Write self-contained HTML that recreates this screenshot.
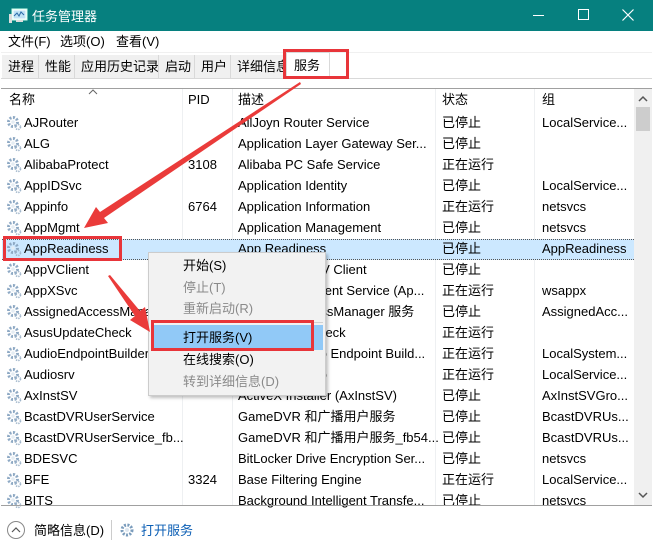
<!DOCTYPE html>
<html><head><meta charset="utf-8"><style>
*{margin:0;padding:0;box-sizing:border-box}
body{width:653px;height:556px;overflow:hidden;background:#fff;font-family:"Liberation Sans","Noto Sans CJK SC",sans-serif;font-size:13px;color:#000;position:relative}
.abs{position:absolute}
#title{position:absolute;left:0;top:0;width:653px;height:31px;background:#06807f;color:#fff;font-size:13px}
#menu span{position:absolute;top:31px;font-size:13px}
.tab{position:absolute;top:55px;height:24px;line-height:23px;font-size:13px;background:#f0f0f0;border-right:1px solid #d9d9d9;padding-left:6px;white-space:nowrap;overflow:hidden}
.row{position:absolute;left:1px;width:633px;height:21px;line-height:21px;white-space:nowrap}
.row span{position:absolute;top:0}
.gear{position:absolute;left:5px;top:3px;width:16px;height:16px}
.cl{position:absolute;top:89px;width:1px;height:417px;background:#eef0f2}
.mi{position:absolute;left:183px;font-size:13px}
.dis{color:#8a8a8a}
</style></head><body>
<div id="title">
 <svg class="abs" style="left:8px;top:8px" width="20" height="16" viewBox="0 0 20 16"><rect x="4" y="1" width="15" height="11" fill="#fff" stroke="#cfe" /><rect x="5.5" y="2.5" width="12" height="8" fill="#bfe3f5"/><polyline points="6,8 9,5 11,8 13,4 16,7" fill="none" stroke="#2a6aa8" stroke-width="1"/><rect x="1" y="6" width="3" height="9" fill="#ddd"/><rect x="8" y="12" width="7" height="2" fill="#ddd"/></svg>
 <span class="abs" style="left:32px;top:6px">任务管理器</span>
 <div class="abs" style="left:533px;top:15px;width:11px;height:1px;background:#fff"></div>
 <div class="abs" style="left:578px;top:9px;width:11px;height:11px;border:1px solid #fff"></div>
 <svg class="abs" style="left:622px;top:9px" width="12" height="12"><path d="M0.5 0.5L11.5 11.5M11.5 0.5L0.5 11.5" stroke="#fff" stroke-width="1.2"/></svg>
</div>
<div id="menu"><span style="left:8px">文件(F)</span><span style="left:60px">选项(O)</span><span style="left:116px">查看(V)</span></div>
<div class="abs" style="left:1px;top:52px;width:651px;height:1px;background:#f0f0f0"></div>
<div class="tab" style="left:2px;width:37px">进程</div>
<div class="tab" style="left:39px;width:36px">性能</div>
<div class="tab" style="left:75px;width:84px">应用历史记录</div>
<div class="tab" style="left:159px;width:36px">启动</div>
<div class="tab" style="left:195px;width:36px">用户</div>
<div class="tab" style="left:231px;width:55px">详细信息</div>
<div class="abs" style="left:286px;top:52px;width:44px;height:27px;background:#fff;border:1px solid #d9d9d9;border-bottom:none;line-height:26px;padding-left:7px">服务</div>
<div class="abs" style="left:1px;top:78px;width:651px;height:1px;background:#d9d9d9"></div>
<div class="abs" style="left:1px;top:88px;width:651px;height:1px;background:#a0a0a0"></div>
<svg class="abs" style="left:88px;top:89px" width="10" height="6"><path d="M1 5L5 1L9 5" fill="none" stroke="#666"/></svg>
<div class="cl" style="left:182px"></div><div class="cl" style="left:232px"></div><div class="cl" style="left:435px"></div><div class="cl" style="left:534px"></div>
<div class="row" style="top:89px"><span style="left:8px">名称</span><span style="left:187px">PID</span><span style="left:237px">描述</span><span style="left:441px">状态</span><span style="left:541px">组</span></div>
<div class="abs" style="left:2px;top:239px;width:632px;height:21px;background:#cce8ff;border-top:1px dotted #555;border-bottom:1px dotted #555"></div>
<div id="rows"></div>
<div class="abs" style="left:634px;top:89px;width:18px;height:417px;background:#f0f0f0"></div>
<svg class="abs" style="left:638px;top:95px" width="10" height="7"><path d="M1 6L5 2L9 6" fill="none" stroke="#555" stroke-width="1.5"/></svg>
<div class="abs" style="left:636px;top:107px;width:14px;height:24px;background:#cdcdcd"></div>
<svg class="abs" style="left:638px;top:492px" width="10" height="7"><path d="M1 1L5 5L9 1" fill="none" stroke="#555" stroke-width="1.5"/></svg>
<div class="abs" style="left:1px;top:505px;width:651px;height:1px;background:#a0a0a0"></div>
<div class="abs" style="left:7px;top:521px;width:18px;height:18px;border:1px solid #888;border-radius:50%"></div>
<svg class="abs" style="left:11px;top:526px" width="10" height="7"><path d="M1 6L5 2L9 6" fill="none" stroke="#555" stroke-width="1.2"/></svg>
<span class="abs" style="left:34px;top:520px">简略信息(D)</span>
<div class="abs" style="left:111px;top:520px;width:1px;height:20px;background:#ccc"></div>
<svg class="abs" style="left:119px;top:522px" width="16" height="16" viewBox="0 0 16 16"><circle cx="8" cy="8" r="5" fill="none" stroke="#7a9cbc" stroke-width="3" stroke-dasharray="2 1.4"/><circle cx="8" cy="8" r="2" fill="#dde7f0"/></svg>
<span class="abs" style="left:141px;top:520px;color:#0c5fb5">打开服务</span>
<div class="abs" style="left:148px;top:252px;width:178px;height:144px;background:#f2f2f2;border:1px solid #ccc;box-shadow:2px 2px 3px rgba(0,0,0,.25)"></div>
<div class="abs" style="left:178px;top:322px;width:145px;height:1px;background:#d0d0d0"></div>
<div class="abs" style="left:151px;top:325px;width:172px;height:25px;background:#91c9f7"></div>
<span class="mi abs" style="top:255px">开始(S)</span>
<span class="mi abs dis" style="top:277px">停止(T)</span>
<span class="mi abs dis" style="top:298px">重新启动(R)</span>
<span class="mi abs" style="top:327px">打开服务(V)</span>
<span class="mi abs" style="top:349px">在线搜索(O)</span>
<span class="mi abs dis" style="top:371px">转到详细信息(D)</span>
<div class="abs" style="left:283px;top:49px;width:66px;height:30px;border:3px solid #e8353a"></div>
<div class="abs" style="left:3px;top:236px;width:119px;height:25px;border:3px solid #e8353a"></div>
<div class="abs" style="left:151px;top:320px;width:163px;height:31px;border:3px solid #e8353a"></div>
<svg class="abs" style="left:0;top:0" width="653" height="556">
 <polygon points="300,82 301,84 104,218 108,223 84,228 96,207 100,212" fill="#ea3b3a"/>
 <polygon points="108,276 110,275 140,311 145,307 150,332 130,320 135,316" fill="#ea3b3a"/>
</svg>
<script>
var d=[["AJRouter","","AllJoyn Router Service","已停止","LocalService..."],["ALG","","Application Layer Gateway Ser...","已停止",""],["AlibabaProtect","3108","Alibaba PC Safe Service","正在运行",""],["AppIDSvc","","Application Identity","已停止","LocalService..."],["Appinfo","6764","Application Information","正在运行","netsvcs"],["AppMgmt","","Application Management","已停止","netsvcs"],["AppReadiness","","App Readiness","已停止","AppReadiness"],["AppVClient","","Microsoft App-V Client","已停止",""],["AppXSvc","","AppX Deployment Service (Ap...","正在运行","wsappx"],["AssignedAccessManager","","AssignedAccessManager 服务","已停止","AssignedAcc..."],["AsusUpdateCheck","","AsusUpdateCheck","正在运行",""],["AudioEndpointBuilder","","Windows Audio Endpoint Build...","正在运行","LocalSystem..."],["Audiosrv","","Windows Audio","正在运行","LocalService..."],["AxInstSV","","ActiveX Installer (AxInstSV)","已停止","AxInstSVGro..."],["BcastDVRUserService","","GameDVR 和广播用户服务","已停止","BcastDVRUs..."],["BcastDVRUserService_fb...","","GameDVR 和广播用户服务_fb54...","已停止","BcastDVRUs..."],["BDESVC","","BitLocker Drive Encryption Ser...","已停止","netsvcs"],["BFE","3324","Base Filtering Engine","正在运行","LocalService..."],["BITS","","Background Intelligent Transfe...","已停止","netsvcs"]];
var g='<svg class="gear" viewBox="0 0 16 16"><circle cx="7" cy="7" r="4.5" fill="none" stroke="#8ea9c4" stroke-width="3" stroke-dasharray="2 1.5"/><circle cx="7" cy="7" r="1.8" fill="#e4ecf3"/><circle cx="12" cy="12" r="2.5" fill="none" stroke="#9fb5ca" stroke-width="1.6" stroke-dasharray="1.3 1"/></svg>';
var h='';d.forEach(function(r,i){h+='<div class="row" style="top:'+(112+21*i)+'px">'+g+'<span style="left:23px">'+r[0]+'</span><span style="left:187px">'+r[1]+'</span><span style="left:237px">'+r[2]+'</span><span style="left:441px">'+r[3]+'</span><span style="left:541px">'+r[4]+'</span></div>'});
document.getElementById('rows').innerHTML=h;
</script>
</body></html>
